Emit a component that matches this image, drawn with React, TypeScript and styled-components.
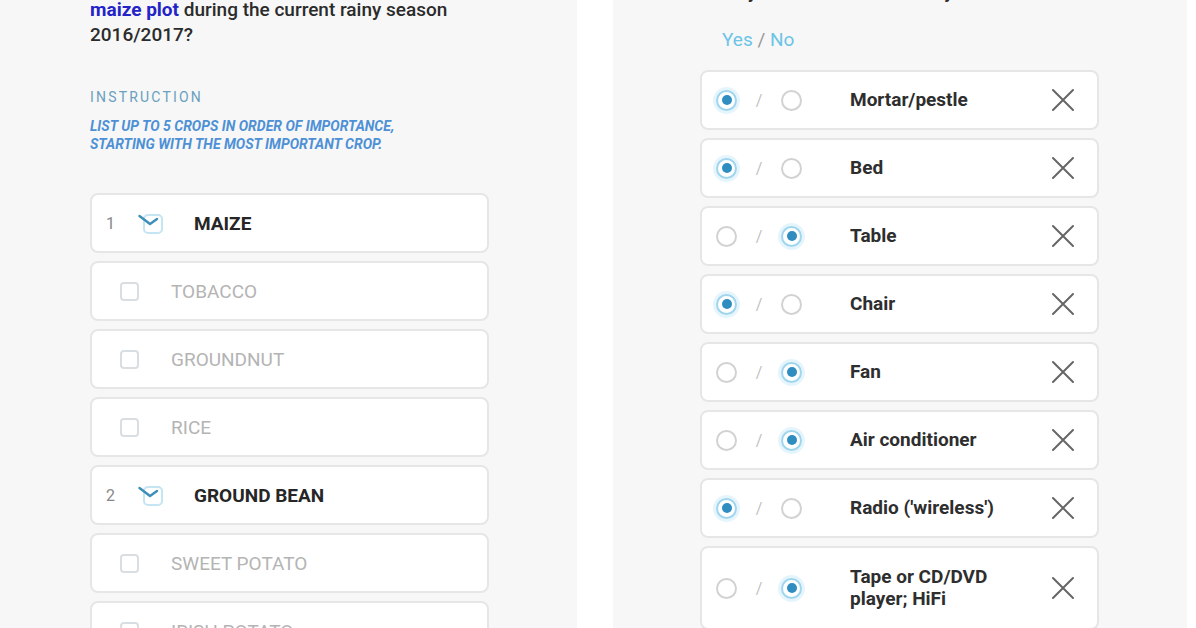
import React from "react";
import styled, { createGlobalStyle } from "styled-components";

const Global = createGlobalStyle`
  html, body { margin: 0; padding: 0; background: #ffffff; }
  body { font-family: Roboto, "Noto Sans", "Liberation Sans", sans-serif; }
`;

const Page = styled.div`
  display: flex;
  width: 1196px;
  height: 628px;
  overflow: hidden;
  background: #ffffff;
`;

const Panel = styled.div<{ $w: number; $pl: number; $ml: number }>`
  width: ${(p) => p.$w}px;
  margin-left: ${(p) => p.$ml}px;
  padding-left: ${(p) => p.$pl}px;
  box-sizing: border-box;
  background: #f7f7f7;
  height: 100%;
  overflow: hidden;
  display: flex;
  flex-direction: column;
`;

const Question = styled.div<{ $mt: number }>`
  margin-top: ${(p) => p.$mt}px;
  font-size: 19px;
  line-height: 25px;
  font-weight: 500;
  color: #2b2b2b;
  width: 420px;
`;

const Highlight = styled.span`
  color: #2323c8;
  font-weight: 700;
`;

const InstructionLabel = styled.div`
  margin-top: 42px;
  font-size: 14px;
  line-height: 16px;
  letter-spacing: 2.2px;
  color: #6a9fbe;
`;

const InstructionText = styled.div`
  margin-top: 12px;
  font-size: 14px;
  line-height: 18px;
  font-style: italic;
  font-weight: 700;
  color: #4d90d6;
  width: 370px;
`;

const List = styled.div<{ $mt: number; $w: number }>`
  margin-top: ${(p) => p.$mt}px;
  width: ${(p) => p.$w}px;
  display: flex;
  flex-direction: column;
  gap: 8px;
`;

const Card = styled.div<{ $h?: number; $pl: number }>`
  box-sizing: border-box;
  height: ${(p) => p.$h ?? 60}px;
  flex-shrink: 0;
  background: #ffffff;
  border: 2px solid #e6e6e6;
  border-radius: 8px;
  display: flex;
  align-items: center;
  padding-left: ${(p) => p.$pl}px;
`;

const Num = styled.span`
  width: 22px;
  font-size: 16px;
  color: #888;
`;

const CheckWrap = styled.span`
  width: 26px;
  height: 24px;
  margin-left: 10px;
  display: flex;
  align-items: center;
`;

const EmptyBox = styled.span`
  width: 19px;
  height: 19px;
  box-sizing: border-box;
  border: 2px solid #d9dee2;
  border-radius: 4px;
`;

const CropLabel = styled.span<{ $on: boolean }>`
  margin-left: ${(p) => (p.$on ? 30 : 32)}px;
  font-size: 19px;
  text-transform: uppercase;
  font-weight: ${(p) => (p.$on ? 700 : 400)};
  color: ${(p) => (p.$on ? "#262626" : "#b4b4b4")};
`;

const YesNo = styled.div`
  margin-top: 25px;
  margin-left: 22px;
  font-size: 19px;
  line-height: 22px;
  color: #6cc4e6;
`;

const Sep = styled.span`
  color: #999;
`;

const Radio = styled.span<{ $on: boolean }>`
  width: 21px;
  height: 21px;
  flex-shrink: 0;
  box-sizing: border-box;
  border-radius: 50%;
  border: 2px solid ${(p) => (p.$on ? "#9fd6ee" : "#d2d2d2")};
  background: #fff;
  box-shadow: ${(p) => (p.$on ? "0 0 0 3px #e6f5fc" : "none")};
  display: flex;
  align-items: center;
  justify-content: center;
  &::after {
    content: "";
    width: 10px;
    height: 10px;
    border-radius: 50%;
    background: ${(p) => (p.$on ? "#2f8dc0" : "transparent")};
  }
`;

const Slash = styled.span`
  width: 36px;
  margin: 0 4px;
  text-align: center;
  font-size: 16px;
  color: #c2c2c2;
`;

const ItemLabel = styled.span`
  margin-left: 48px;
  width: 170px;
  font-size: 19px;
  line-height: 22px;
  font-weight: 700;
  color: #2e2e2e;
`;

const Remove = styled.span`
  margin-left: auto;
  margin-right: 22px;
  width: 24px;
  height: 24px;
  display: flex;
`;

const CheckedIcon = () => (
  <svg width="26" height="24" viewBox="0 0 26 24">
    <rect x="6" y="4" width="18" height="18" rx="4" fill="none" stroke="#c4e5f2" strokeWidth="2" />
    <path d="M1.5 5 L12 13 L19 8" fill="none" stroke="#3d8fb8" strokeWidth="2.4" strokeLinecap="round" strokeLinejoin="round" />
  </svg>
);

const XIcon = () => (
  <svg width="24" height="24" viewBox="0 0 24 24">
    <path d="M2 2 L22 22 M22 2 L2 22" stroke="#666" strokeWidth="2" strokeLinecap="round" />
  </svg>
);

const crops: { n?: number; label: string }[] = [
  { n: 1, label: "Maize" },
  { label: "Tobacco" },
  { label: "Groundnut" },
  { label: "Rice" },
  { n: 2, label: "Ground bean" },
  { label: "Sweet potato" },
  { label: "Irish potato" },
];

const items: { label: string; yes: boolean; h?: number }[] = [
  { label: "Mortar/pestle", yes: true },
  { label: "Bed", yes: true },
  { label: "Table", yes: false },
  { label: "Chair", yes: true },
  { label: "Fan", yes: false },
  { label: "Air conditioner", yes: false },
  { label: "Radio ('wireless')", yes: true },
  { label: "Tape or CD/DVD player; HiFi", yes: false, h: 84 },
];

export default function App() {
  return (
    <>
      <Global />
      <Page>
        <Panel $w={577} $pl={90} $ml={0}>
          <Question $mt={-28}>
            What crops did you plant on this
            <br />
            <Highlight>maize plot</Highlight> during the current rainy season 2016/2017?
          </Question>
          <InstructionLabel>INSTRUCTION</InstructionLabel>
          <InstructionText>
            LIST UP TO 5 CROPS IN ORDER OF IMPORTANCE, STARTING WITH THE MOST IMPORTANT CROP.
          </InstructionText>
          <List $mt={40} $w={399}>
            {crops.map((c) =>
              c.n ? (
                <Card key={c.label} $pl={14}>
                  <Num>{c.n}</Num>
                  <CheckWrap>
                    <CheckedIcon />
                  </CheckWrap>
                  <CropLabel $on>{c.label}</CropLabel>
                </Card>
              ) : (
                <Card key={c.label} $pl={28}>
                  <EmptyBox />
                  <CropLabel $on={false}>{c.label}</CropLabel>
                </Card>
              )
            )}
          </List>
        </Panel>
        <Panel $w={574} $pl={87} $ml={36}>
          <Question $mt={-21}>Does your household own any</Question>
          <YesNo>
            Yes <Sep>/</Sep> No
          </YesNo>
          <List $mt={19} $w={399}>
            {items.map((it) => (
              <Card key={it.label} $pl={14} $h={it.h}>
                <Radio $on={it.yes} />
                <Slash>/</Slash>
                <Radio $on={!it.yes} />
                <ItemLabel>{it.label}</ItemLabel>
                <Remove>
                  <XIcon />
                </Remove>
              </Card>
            ))}
          </List>
        </Panel>
      </Page>
    </>
  );
}
